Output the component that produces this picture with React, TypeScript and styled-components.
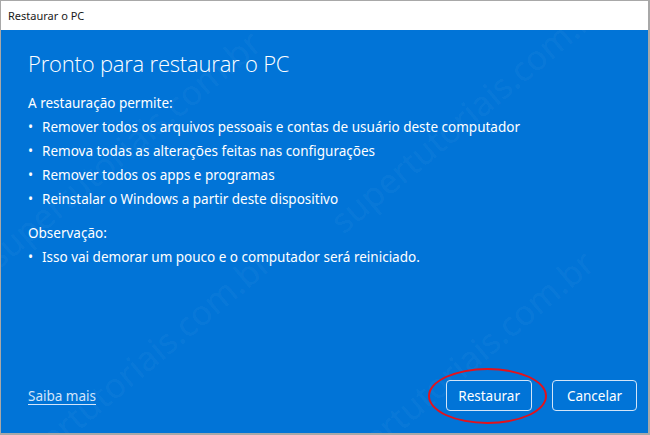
import React from 'react';
import styled, { createGlobalStyle } from 'styled-components';

const Global = createGlobalStyle`
  html, body {
    margin: 0;
    padding: 0;
    background: #ffffff;
  }
  body {
    font-family: "Noto Sans", "Open Sans", sans-serif;
  }
`;

const Window = styled.div`
  position: relative;
  width: 650px;
  height: 435px;
  box-sizing: border-box;
  display: flex;
  flex-direction: column;
  border: 1px solid #a8a8a8;
  border-bottom-width: 2px;
  border-right-width: 2px;
  overflow: hidden;
`;

const TitleBar = styled.div`
  height: 29px;
  flex: none;
  display: flex;
  align-items: center;
  padding-left: 7px;
  background: #ffffff;
  color: #1a1a1a;
  font-size: 11px;
`;

const Body = styled.div`
  position: relative;
  flex: 1;
  display: flex;
  flex-direction: column;
  background: #0174d7;
  color: #ffffff;
  padding: 17px 11px 22px 27px;
  overflow: hidden;
`;

const Heading = styled.h1`
  margin: 0 0 12px;
  font-family: "Open Sans", "Noto Sans", sans-serif;
  font-weight: 300;
  font-size: 22px;
  line-height: 32px;
  letter-spacing: -0.2px;
`;

const Para = styled.p<{ $gap?: number }>`
  margin: 0 0 ${(p) => p.$gap ?? 0}px;
  font-size: 13.5px;
  line-height: 24px;
`;

const List = styled.ul<{ $gap?: number }>`
  list-style: none;
  margin: 0 0 ${(p) => p.$gap ?? 0}px;
  padding: 0;
`;

const Item = styled.li`
  display: flex;
  font-size: 13.5px;
  line-height: 24px;
  &::before {
    content: '•';
    width: 14px;
    flex: none;
  }
`;

const Footer = styled.div`
  margin-top: auto;
  display: flex;
  align-items: center;
  gap: 20px;
`;

const Link = styled.a`
  margin-right: auto;
  color: #d3e5fa;
  font-size: 13.5px;
  text-decoration: underline;
  text-underline-offset: 3px;
`;

const Button = styled.button`
  position: relative;
  box-sizing: border-box;
  min-width: 85px;
  height: 31px;
  padding: 0 11px;
  border: 1px solid #d3e5f8;
  border-radius: 4px;
  background: #0174d7;
  color: #ffffff;
  font-family: "Noto Sans", sans-serif;
  font-size: 13.5px;
`;

const Ring = styled.span`
  position: absolute;
  left: -19px;
  top: -13px;
  width: 119px;
  height: 56px;
  box-sizing: border-box;
  border: 2px solid #e4121b;
  border-radius: 50%;
  pointer-events: none;
`;

const Mark = styled.span<{ $x: number; $y: number }>`
  position: absolute;
  left: ${(p) => p.$x}px;
  top: ${(p) => p.$y}px;
  transform: rotate(-40deg);
  transform-origin: left center;
  font-family: "Noto Sans", sans-serif;
  font-size: 34px;
  line-height: 50px;
  color: rgba(255, 255, 255, 0.055);
  white-space: nowrap;
  pointer-events: none;
`;

const marks = [
  { x: 322, y: 425 },
  { x: -1, y: 425 },
  { x: 334, y: 170 },
  { x: -11, y: 205 },
];

export default function App() {
  return (
    <>
      <Global />
      <Window>
        <TitleBar>Restaurar o PC</TitleBar>
        <Body>
          {marks.map((m, i) => (
            <Mark key={i} $x={m.x} $y={m.y}>
              supertutoriais.com.br
            </Mark>
          ))}
          <Heading>Pronto para restaurar o PC</Heading>
          <Para>A restauração permite:</Para>
          <List $gap={10}>
            <Item>Remover todos os arquivos pessoais e contas de usuário deste computador</Item>
            <Item>Remova todas as alterações feitas nas configurações</Item>
            <Item>Remover todos os apps e programas</Item>
            <Item>Reinstalar o Windows a partir deste dispositivo</Item>
          </List>
          <Para>Observação:</Para>
          <List>
            <Item>Isso vai demorar um pouco e o computador será reiniciado.</Item>
          </List>
          <Footer>
            <Link href="#">Saiba mais</Link>
            <Button>
              Restaurar
              <Ring />
            </Button>
            <Button>Cancelar</Button>
          </Footer>
        </Body>
      </Window>
    </>
  );
}
